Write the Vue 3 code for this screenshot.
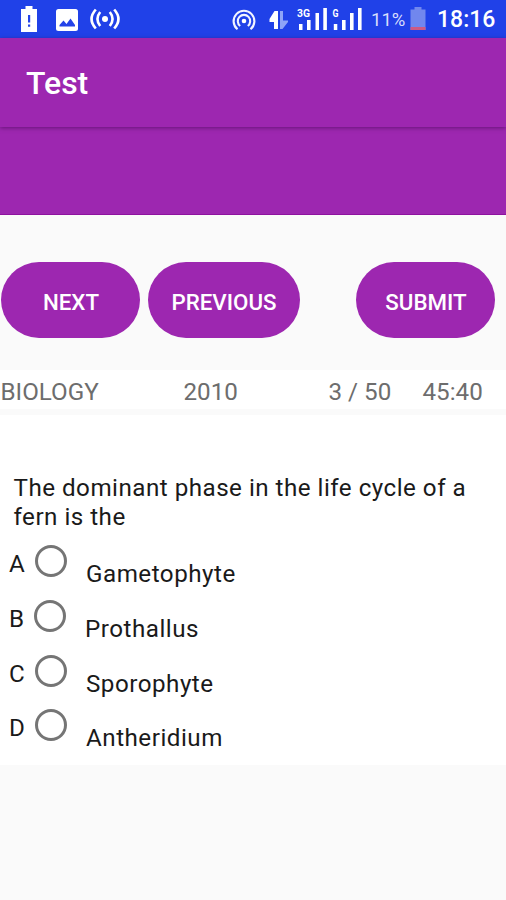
<script setup>
const options = [
  { letter: 'A', text: 'Gametophyte' },
  { letter: 'B', text: 'Prothallus', shifted: true },
  { letter: 'C', text: 'Sporophyte' },
  { letter: 'D', text: 'Antheridium' },
]
</script>

<template>
  <div class="screen">
    <header class="status">
      <svg class="ic-battery-alert" width="18" height="26" viewBox="0 0 18 26">
        <path d="M5.500 0h7v3H17v23H1V3h4.500z" fill="#fff" />
        <path d="M8 9h2.200v7.500H8zM8 18.500h2.200v2.200H8z" fill="#2443e8" />
      </svg>
      <svg class="ic-image" width="22" height="22" viewBox="0 0 22 22">
        <rect width="22" height="22" rx="2.500" fill="#fff" />
        <path d="M3.500 17.500v-1.500l4-4.500 3 3.500 4-5.500 4.500 6.500v1.500z" fill="#2443e8" />
      </svg>
      <svg class="ic-cast" width="30" height="22" viewBox="0 0 30 22" fill="none" stroke="#fff" stroke-width="2.600">
        <circle cx="15" cy="11" r="3" fill="#fff" stroke="none" />
        <path d="M10.200 4q-5.500 7 0 14M19.800 4q5.500 7 0 14M5.800 1.500q-8.500 9.500 0 19M24.200 1.500q8.500 9.500 0 19" />
      </svg>
      <span class="grow"></span>
      <svg class="ic-hotspot" width="24" height="22" viewBox="0 0 24 22" fill="none" stroke="#f2f4ff" stroke-width="2.100">
        <circle cx="12" cy="12" r="2.300" fill="#fff" stroke="none" />
        <path d="M8.200 17a6.200 6.200 0 1 1 7.600 0M5.500 20.300a10.400 10.400 0 1 1 13 0" />
      </svg>
      <svg class="ic-data" width="20" height="20" viewBox="0 0 20 20">
        <path d="M5.500 1H9v18H5V12H.5V9z" fill="#fff" />
        <path d="M11 1h3v9.500h5V12l-5.500 7H11z" fill="#8ea4f8" />
      </svg>
      <svg class="ic-signal" width="67" height="26" viewBox="0 0 67 26">
        <g fill="#fff">
          <path d="M3 19h3.500v6H3zM11 15h3.600v10H11zM19.500 8H23v17h-3.500zM27.300 3h3.600v22h-3.600z" />
          <path d="M37.800 19h3.500v6h-3.500zM46 15h3.600v10H46zM54 8h3.600v17H54zM62 3h3.600v22H62z" />
        </g>
        <g fill="#fff" class="net">
          <text x="1" y="11.500" textLength="13" lengthAdjust="spacingAndGlyphs">3G</text>
          <text x="36.500" y="11.500" textLength="6" lengthAdjust="spacingAndGlyphs">G</text>
        </g>
      </svg>
      <span class="pct">11%</span>
      <svg class="ic-battery" width="16" height="24" viewBox="0 0 16 24">
        <path d="M4.500 0h7v2.500h4v20.500H.5V2.500h4z" fill="#7187ee" />
        <path d="M.5 20h15v3H.5z" fill="#cd5a84" />
      </svg>
      <span class="clock">18:16</span>
    </header>

    <div class="appbar"><h1>Test</h1></div>
    <div class="band"></div>

    <div class="actions">
      <button class="btn next"><span>NEXT</span></button>
      <button class="btn prev"><span>PREVIOUS</span></button>
      <button class="btn submit"><span>SUBMIT</span></button>
    </div>

    <div class="info">
      <span class="subject">BIOLOGY</span>
      <span class="year">2010</span>
      <span class="count">3 / 50</span>
      <span class="timer">45:40</span>
    </div>

    <main class="card">
      <p class="question">The dominant phase in the life cycle of a fern is the</p>
      <div v-for="o in options" :key="o.letter" class="option" :class="{ shifted: o.shifted }">
        <span class="letter">{{ o.letter }}</span>
        <span class="radio"></span>
        <span class="answer">{{ o.text }}</span>
      </div>
    </main>
  </div>
</template>

<style>
body { margin: 0; background: #fafafa; }
</style>

<style scoped>
* { box-sizing: border-box; }
.screen {
  width: 506px;
  height: 900px;
  overflow: hidden;
  background: #fafafa;
  font-family: Roboto, "Liberation Sans", sans-serif;
  white-space: nowrap;
}
.status {
  height: 38px;
  background: #2041e8;
  display: flex;
  align-items: flex-start;
  color: #fff;
}
.status svg { flex: none; }
.ic-battery-alert { margin: 6px 0 0 20px; }
.ic-image { margin: 9px 0 0 18px; }
.ic-cast { margin: 8px 0 0 30px; margin-left: 12px; }
.grow { flex: 1; }
.ic-hotspot { margin: 9px 13px 0 0; }
.ic-data { margin: 10px 7px 0 0; }
.ic-signal { margin: 5px 8px 0 0; }
.net { font: 700 10.500px Roboto, sans-serif; }
.pct { width: 35px; margin: 9px 4px 0 0; font-size: 18.500px; line-height: 22px; color: #d8defc; }
.ic-battery { margin: 7px 11px 0 0; }
.clock { width: 69px; margin-top: 7px; font-size: 23px; font-weight: 500; line-height: 26px; }
.appbar {
  position: relative;
  height: 89px;
  background: #9d27b0;
  padding: 26px 0 0 26px;
  box-shadow: 0 1px 4px rgba(50, 0, 65, 0.5);
}
h1 { margin: 0; color: #fff; font-size: 32px; font-weight: 500; line-height: 38px; }
.band { height: 88px; background: #9d27b0; border-bottom: 1px solid #8e119f; }
.actions { display: flex; height: 155px; padding-top: 47px; }
.btn {
  height: 76px;
  padding: 3px 0 0 1px;
  border: 0;
  border-radius: 38px;
  background: #9d27b0;
  color: #fff;
  font: 500 22.300px/28px Roboto, sans-serif;
}
.next { width: 139px; margin-left: 1px; }
.prev { width: 152px; margin-left: 8px; padding-left: 0; }
.submit { width: 139px; margin-left: 56px; }
.info {
  display: flex;
  height: 39px;
  padding-left: 0.500px;
  background: #fff;
  color: #6d6d6d;
  font-size: 24.200px;
  line-height: 44px;
}
.subject { width: 183px; }
.year { width: 145px; }
.count { width: 94px; }
.card { height: 350px; margin-top: 6px; background: #fff; padding: 59px 0 0; color: #1a1a1a; }
.question {
  width: 475px;
  margin: 0 0 8px 13.500px;
  height: 58px;
  white-space: normal;
  font-size: 24.200px;
  line-height: 29px;
  letter-spacing: 0.480px;
}
.option { display: flex; height: 54.800px; font-size: 24.200px; line-height: 28px; }
.letter { width: 26px; margin-left: 9px; padding-top: 10px; }
.radio { width: 32px; height: 32px; margin-top: 5px; border: 3px solid #757575; border-radius: 50%; }
.answer { margin-left: 19px; padding-top: 20px; letter-spacing: 0.500px; }
.shifted .letter { width: 25px; }
</style>
